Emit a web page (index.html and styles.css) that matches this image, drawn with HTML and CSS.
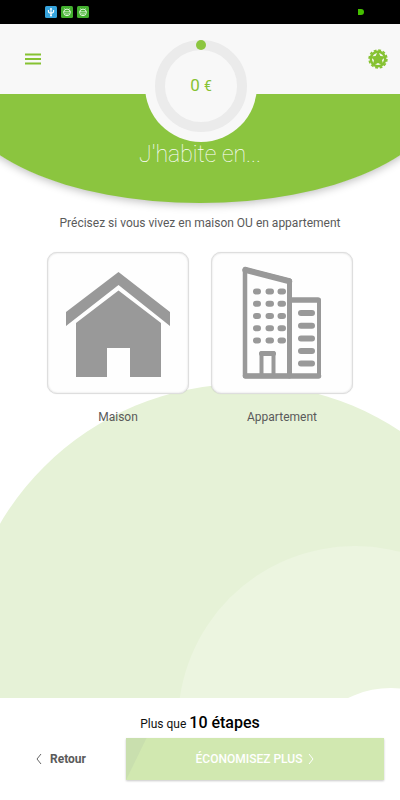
FILE: index.html
```html
<!DOCTYPE html>
<html lang="fr">
<head>
  <meta charset="UTF-8">
  <meta name="viewport" content="width=device-width, initial-scale=1.0">
  <title>J'habite en...</title>
  <link rel="stylesheet" href="styles.css">
</head>
<body>
  <div class="status-bar">
    <div class="status-icons">
      <svg class="status-icon" viewBox="0 0 12 12">
        <rect width="12" height="12" rx="1.5" fill="#36a3dc"/>
        <path d="M6 2.2v7.6M3.4 4v1.2q0 1.8 2.6 2.1 2.6-.3 2.6-2.1V4" fill="none" stroke="#fff" stroke-width="1.1"/>
        <path d="M6 1.8l1.3 1.8H4.7z" fill="#fff"/>
        <circle cx="6" cy="9.4" r="1" fill="#fff"/>
      </svg>
      <svg class="status-icon" viewBox="0 0 12 12">
        <rect width="12" height="12" rx="1.5" fill="#43b02f"/>
        <circle cx="6" cy="6.4" r="3.3" fill="none" stroke="#e4f7df" stroke-width="1"/>
        <path d="M2.3 5.8h7.400M3.500 2.500l1 1.200M8.500 2.500l-1 1.200M4.200 7.600q1.800 1.200 3.600 0" fill="none" stroke="#e4f7df" stroke-width=".8"/>
      </svg>
      <svg class="status-icon" viewBox="0 0 12 12">
        <rect width="12" height="12" rx="1.5" fill="#43b02f"/>
        <circle cx="6" cy="6.4" r="3.3" fill="none" stroke="#e4f7df" stroke-width="1"/>
        <path d="M2.3 5.8h7.400M3.500 2.500l1 1.200M8.500 2.500l-1 1.200M4.200 7.600q1.800 1.200 3.600 0" fill="none" stroke="#e4f7df" stroke-width=".8"/>
      </svg>
    </div>
    <span class="battery"></span>
  </div>

  <header class="topbar">
    <button class="icon-btn" type="button" aria-label="Menu">
      <svg width="16" height="12" viewBox="0 0 16 12">
        <path d="M0 1.500h16M0 6h16M0 10.500h16" stroke="#86c232" stroke-width="2"/>
      </svg>
    </button>
    <div class="gauge">
      <div class="gauge-ring">
        <span class="gauge-dot"></span>
        <span class="gauge-value">0 <small>€</small></span>
      </div>
    </div>
    <button class="icon-btn" type="button" aria-label="Récompenses">
      <svg width="20" height="20" viewBox="0 0 20 20">
        <circle cx="10" cy="10" r="7.200" fill="none" stroke="#86c232" stroke-width="2.400"/>
        <circle cx="10" cy="10" r="8.900" fill="none" stroke="#86c232" stroke-width="1.600" stroke-dasharray="2.800 1.860"/>
        <path d="M10 2.200l2.400 4.800 5.400.4-3.800 3.700 1.500 5.600-5.500-2.600-5.500 2.600L6 11.100 2.200 7.400 7.600 7z" fill="#86c232"/>
      </svg>
    </button>
  </header>

  <main class="content">
    <div class="circle circle-large"></div>
    <div class="circle circle-medium"></div>
    <div class="circle circle-small"></div>

    <div class="hero">
      <h1>J'habite en...</h1>
    </div>

    <p class="question">Précisez si vous vivez en maison OU en appartement</p>

    <div class="choices">
      <button class="choice" type="button">
        <span class="choice-box">
          <svg viewBox="0 0 142 142">
            <g fill="#999">
              <path d="M71.500 20L123 60v14L71.500 33 19 74V60z"/>
              <path d="M71.500 38.500L114 71v54H83V96H60v29H29V71z"/>
            </g>
          </svg>
        </span>
        <span class="choice-label">Maison</span>
      </button>
      <button class="choice" type="button">
        <span class="choice-box">
          <svg viewBox="0 0 142 142">
            <g fill="none" stroke="#999" stroke-linejoin="round" stroke-linecap="round">
              <path d="M34 17v107h44.500V28.500z" stroke-width="4.500"/>
              <path d="M34 18l44.500 11.500" stroke-width="5.500"/>
              <path d="M78.500 29v95" stroke-width="5"/>
              <path d="M80 48h27" stroke-width="5.500"/>
              <path d="M108 48v76" stroke-width="4"/>
              <path d="M34.500 124h73" stroke-width="5.500"/>
              <path d="M50.500 123v-22h12v22" stroke-width="4"/>
              <path d="M50.500 101.500h12" stroke-width="5"/>
            </g>
            <g stroke="#999" stroke-width="6" stroke-linecap="round">
              <path d="M45 39.500h2M57.500 39.500H60M69.500 39.500H72"/>
              <path d="M45 51.800h2M57.500 51.800H60M69.500 51.800H72"/>
              <path d="M45 64h2M57.500 64H60M69.500 64H72"/>
              <path d="M45 76.200h2M57.500 76.200H60M69.500 76.200H72"/>
              <path d="M45 88.500h2M57.500 88.500H60M69.500 88.500H72"/>
              <path d="M90 61h11M90 73.800h11M90 86.500h11M90 99h11M90 111.600h11"/>
            </g>
          </svg>
        </span>
        <span class="choice-label">Appartement</span>
      </button>
    </div>
  </main>

  <footer class="footer">
    <p class="steps">Plus que <strong>10 étapes</strong></p>
    <div class="actions">
      <button class="back" type="button">
        <svg width="6" height="12" viewBox="0 0 6 12">
          <path d="M5 1L1 6l4 5" fill="none" stroke="#666" stroke-width="1"/>
        </svg>
        Retour
      </button>
      <button class="next" type="button">
        ÉCONOMISEZ PLUS
        <svg width="6" height="12" viewBox="0 0 6 12">
          <path d="M1 1l4 5-4 5" fill="none" stroke="#fff" stroke-width="1"/>
        </svg>
      </button>
    </div>
  </footer>
</body>
</html>
```
FILE: styles.css
```css
* {
  box-sizing: border-box;
}

body {
  margin: 0;
  min-height: 100vh;
  display: flex;
  flex-direction: column;
  font-family: Roboto, sans-serif;
  font-size: 12px;
  color: #5a5a5a;
  background: #fff;
}

button {
  border: none;
  background: none;
  padding: 0;
  margin: 0;
  font-family: inherit;
  color: inherit;
  cursor: pointer;
}

svg {
  display: block;
}

/* Status bar */
.status-bar {
  display: flex;
  align-items: center;
  justify-content: space-between;
  height: 24px;
  padding: 0 36px 0 45px;
  background: #000;
}

.status-icons {
  display: flex;
  gap: 4px;
}

.status-icon {
  width: 12px;
  height: 12px;
}

.battery {
  width: 6px;
  height: 6px;
  background: #45bf00;
  border-radius: 0 3px 3px 0;
}

/* Top bar */
.topbar {
  position: relative;
  z-index: 2;
  display: flex;
  align-items: center;
  justify-content: space-between;
  height: 70px;
  padding: 0 12px 0 25px;
  background: #f8f8f8;
}

.gauge {
  position: absolute;
  left: 50%;
  top: 6px;
  width: 112px;
  height: 112px;
  margin-left: -55px;
  padding: 10px;
  border-radius: 50%;
  background: #f8f8f8;
}

.gauge-ring {
  position: relative;
  display: flex;
  align-items: center;
  justify-content: center;
  width: 92px;
  height: 92px;
  border: 10px solid #ebebeb;
  border-radius: 50%;
}

.gauge-dot {
  position: absolute;
  left: 31px;
  top: -10px;
  width: 10px;
  height: 10px;
  border-radius: 50%;
  background: #8bc53f;
}

.gauge-value {
  font-size: 17px;
  line-height: 20px;
  padding-bottom: 2px;
  color: #86c232;
}

.gauge-value small {
  font-size: 14px;
}

/* Content */
.content {
  position: relative;
  flex: 1;
  overflow: hidden;
}

.circle {
  position: absolute;
  border-radius: 50%;
}

.circle-large {
  left: -39px;
  bottom: -252px;
  width: 566px;
  height: 566px;
  background: #e6f2d7;
}

.circle-medium {
  left: 178px;
  bottom: -202px;
  width: 354px;
  height: 354px;
  background: #ecf5e0;
}

.circle-small {
  left: 294px;
  bottom: -184px;
  width: 194px;
  height: 194px;
  background: #fff;
}

.hero {
  position: relative;
  width: 121%;
  height: 109px;
  margin: 0 -10.5%;
  padding-top: 47px;
  text-align: center;
  background: #8bc53f;
  border-radius: 0 0 50% 50% / 0 0 100% 100%;
  box-shadow: 0 2px 8px rgba(0, 0, 0, 0.25);
}

.hero h1 {
  margin: 0;
  font-size: 23px;
  line-height: 28px;
  font-weight: 100;
  color: #fff;
}

.question {
  position: relative;
  margin: 12px 0 21px;
  line-height: 16px;
  text-align: center;
}

.choices {
  position: relative;
  display: flex;
  justify-content: center;
  gap: 22px;
  padding-bottom: 20px;
}

.choice {
  width: 142px;
}

.choice-box {
  display: block;
  border: 1px solid #dedede;
  border-radius: 10px;
  background: #fefefe;
  box-shadow: inset 0 0 2px rgba(0, 0, 0, 0.15), 0 0 1px rgba(0, 0, 0, 0.15);
}

.choice-box svg {
  margin: -1px;
}

.choice-label {
  display: block;
  margin-top: 15px;
  font-size: 12px;
  line-height: 16px;
}

/* Footer */
.footer {
  position: relative;
  padding: 16px 16px 20px;
  background: #fff;
}

.steps {
  margin: 0 0 4px;
  line-height: 20px;
  text-align: center;
  color: #111;
}

.steps strong {
  font-size: 16px;
  line-height: 16px;
  font-weight: 500;
  color: #000;
}

.actions {
  display: flex;
}

.back {
  display: flex;
  align-items: center;
  gap: 8px;
  width: 110px;
  padding-left: 20px;
  font-size: 12px;
  font-weight: 700;
}

.next {
  flex: 1;
  display: flex;
  align-items: center;
  justify-content: center;
  gap: 6px;
  height: 42px;
  font-size: 12px;
  font-weight: 500;
  color: #fff;
  background: linear-gradient(116deg, #c9dfae 18px, #d1e8b0 19px);
  box-shadow: 0 1px 2px rgba(0, 0, 0, 0.22);
}
```
